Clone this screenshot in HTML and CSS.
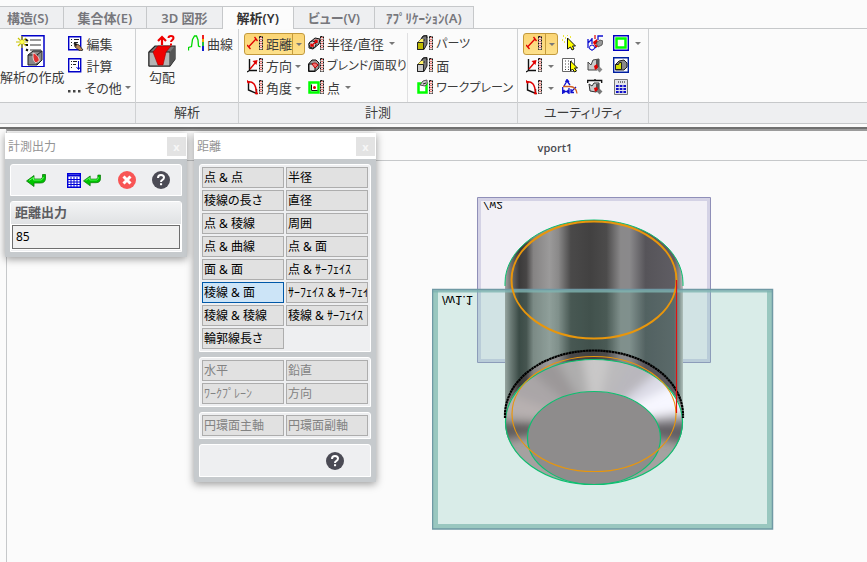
FILE: index.html
```html
<!DOCTYPE html>
<html lang="ja">
<head>
  <meta charset="UTF-8" />
  <meta name="viewport" content="width=device-width, initial-scale=1.0"/>
  <title>計測 - 距離</title>
  <link rel="stylesheet" href="styles.css">
</head>
<body>
  <svg class="defs" aria-hidden="true">
    <symbol id="ruler" viewBox="0 0 16 16">
      <path d="M12.500 1.500h3v13h-3z" fill="#f4e9e4" stroke="#111" stroke-dasharray="2 1"/>
      <path d="M14 2v12" stroke="#d00000" stroke-dasharray="1 1"/>
    </symbol>
    <symbol id="distance" viewBox="0 0 16 16">
      <path d="M1.500 12L9 4M0 10l3.500 4M7.500 2l3 4" stroke="#e00000" stroke-width="1.300" fill="none"/>
      <use href="#ruler"/>
    </symbol>
    <symbol id="direction" viewBox="0 0 16 16">
      <path d="M2.500 2v11.500H10M2.500 13.500L0 15" stroke="#111" stroke-width="1.400" fill="none"/>
      <path d="M3 12l6-7" stroke="#e00000" stroke-width="1.400"/><path d="M10.500 3l-1 5-4-4z" fill="#e00000"/>
      <use href="#ruler"/>
    </symbol>
    <symbol id="angle" viewBox="0 0 16 16">
      <path d="M1.500 2v9l8 3.500V10" stroke="#111" stroke-width="1.400" fill="none"/>
      <path d="M0 3c6-1 9 2 9.500 11M8 14.500h3M0 1.500l2 3" stroke="#e00000" stroke-width="1.500" fill="none"/>
      <use href="#ruler"/>
    </symbol>
    <symbol id="radius" viewBox="0 0 16 16">
      <path d="M1 8l6-5 5 1-1 5-6 5-4-1z" fill="#aaa" stroke="#111"/>
      <circle cx="4.500" cy="9.500" r="3.500" fill="#ccc" stroke="#111"/>
      <path d="M3 11l6-5M3 8.500V11h3M6.500 5.500H9V8" stroke="#e00000" stroke-width="1.400" fill="none"/>
      <use href="#ruler"/>
    </symbol>
    <symbol id="blend" viewBox="0 0 16 16">
      <path d="M.500 7L4 3h4l3 3v5l-4 3.500H.500z" fill="#999" stroke="#111"/>
      <path d="M1 7h4l2 2v5H1z" fill="#ddd" stroke="#111"/>
      <path d="M4 7c2-1 3-2 6 1l-3 3z" fill="#f07070" stroke="#c00000"/>
      <use href="#ruler"/>
    </symbol>
    <symbol id="point" viewBox="0 0 16 16">
      <path d="M1.500 3.500h9v10h-9z" fill="#fff" stroke="#0f0" stroke-width="2.500"/>
      <path d="M3.500 5.500v6h6" fill="none" stroke="#111"/><circle cx="6.500" cy="8.500" r="1.500" fill="#e00000"/>
      <use href="#ruler"/>
    </symbol>
    <symbol id="part" viewBox="0 0 16 16">
      <path d="M.500 7.500L4 4l2-3 4-.500V9l-3 5.500H.500z" fill="#777" stroke="#222"/>
      <path d="M.500 7.500h6v7h-6z" fill="#bcb800" stroke="#222"/><path d="M1 7l3-3h3L6 7z" fill="#fff36a"/>
      <path d="M5 3c1-3 5-3 5 0M6 5h2" stroke="#222" fill="none"/>
      <use href="#ruler"/>
    </symbol>
    <symbol id="face" viewBox="0 0 16 16">
      <path d="M.500 7.500L4 4l2-3 4-.500V9l-3 5.500H.500z" fill="#777" stroke="#222"/>
      <path d="M.500 7.500h6v7h-6z" fill="#ccc" stroke="#222"/><path d="M1 7l3-3h3L6 7z" fill="#fff36a"/>
      <path d="M5 3c1-3 5-3 5 0M6 5h2" stroke="#222" fill="none"/>
      <use href="#ruler"/>
    </symbol>
    <symbol id="workplane" viewBox="0 0 16 16">
      <path d="M1.500 4.500h8v9h-8z" fill="#fff" stroke="#0f0" stroke-width="2.500"/>
      <path d="M3 6l3-4 4-1v4L8 7z" fill="#ccc" stroke="#555"/><path d="M6 5l3-1" stroke="#222"/>
      <use href="#ruler"/>
    </symbol>
    <symbol id="enter" viewBox="0 0 20 14">
      <path d="M.500 8L8 2.500V6h6.500q2 0 2-2V1.500h3V5q0 5-5 5H8v3.500z" fill="#00c400" stroke="#0a7a0a" stroke-width=".8"/>
      <path d="M3 7.500L7.500 4.500v2.500H15q2-.5 2.300-3" stroke="#5dff5d" fill="none"/>
    </symbol>
    <symbol id="help" viewBox="0 0 18 18">
      <circle cx="9" cy="9" r="9" fill="#4b4b55"/>
      <path d="M6 7q0-3 3-3t3 2.600q0 1.400-1.500 2.200T9 11" fill="none" stroke="#fff" stroke-width="2"/>
      <path d="M8 12.200h2.100v2H8z" fill="#fff"/>
    </symbol>
  </svg>

  <header class="ribbon">
    <nav class="tabs">
      <button type="button" class="tab tab-first">構造(S)</button>
      <button type="button" class="tab">集合体(E)</button>
      <button type="button" class="tab">3D 図形</button>
      <button type="button" class="tab active">解析(Y)</button>
      <button type="button" class="tab">ビュー(V)</button>
      <button type="button" class="tab tab-last">ｱﾌﾟﾘｹｰｼｮﾝ(A)</button>
    </nav>

    <div class="groups">
      <section class="group group-create">
        <div class="tools">
          <button type="button" class="big">
            <svg class="icon-big" viewBox="0 0 32 32">
              <path d="M6 .700h22v31H6z" fill="#fff" stroke="#0000c8" stroke-width="1.500"/>
              <path d="M14 5h11M14 10h11M14 15h11" stroke="#333"/>
              <path d="M9 4l3 2M9 10h3M10 14.500l2 1" stroke="#111" stroke-width="2"/>
              <path d="M6 1v12M0 7h12M2 3l8 8M10 3l-8 8" stroke="#c9c400" stroke-width="1.200"/>
              <circle cx="6" cy="7" r="2" fill="#ffff50"/>
              <path d="M12 20l5-4h9v9l-5 5h-9z" fill="#888" stroke="#222"/>
              <path d="M12 20h9l5-4M21 20v10" stroke="#222" fill="none"/>
              <path d="M17 18c4 1 7 6 6 8l-3 2c-3-2-3-5-3-10z" fill="#e03030" stroke="#fff" stroke-width=".7"/>
            </svg>
            <span>解析の作成</span>
          </button>
          <div class="column">
            <button type="button" class="tool">
              <svg class="icon" viewBox="0 0 16 16"><path d="M.700 1.700h12v13h-12z" fill="#fff" stroke="#0000c8" stroke-width="1.400"/><path d="M3 4.500h1M6 4.500h5M3 7.500h1M6 7.500h4M3 10.500h1" stroke="#222"/><path d="M6 8l5 2 4 5-3 1-5-4z" fill="#b98555" stroke="#222" stroke-width=".8"/><path d="M6 8l3 1-1 3z" fill="#111"/></svg>
              編集
            </button>
            <button type="button" class="tool">
              <svg class="icon" viewBox="0 0 16 16"><path d="M.700 1.700h12v13h-12z" fill="#fff" stroke="#0000c8" stroke-width="1.400"/><path d="M3 4.500h1M5 4.500h4M3 7.500h1M5 7.500h3M3 10.500h1" stroke="#222"/><path d="M10.500 4v8M8.500 10l2 2.500 2-2.500" stroke="#0000c8" fill="none"/></svg>
              計算
            </button>
            <button type="button" class="tool more">
              <svg class="icon" viewBox="0 0 16 16"><path d="M0 11h2.500v2.500H0zM5 11h2.500v2.500H5zM10 11h2.500v2.500H10z" fill="#444"/></svg>
              その他<i class="arrow"></i>
            </button>
          </div>
        </div>
        <h2></h2>
      </section>

      <section class="group group-analysis">
        <div class="tools">
          <button type="button" class="big">
            <svg class="icon-big" viewBox="0 0 32 32">
              <path d="M3 17l6-6h20v13l-5 7H3z" fill="#777" stroke="#222" stroke-width="1.200"/>
              <path d="M3 17h21v14H3z" fill="#b5b5b5" stroke="#222"/><path d="M24 17l5-6v13l-5 7z" fill="#555"/>
              <path d="M7 17l5-6h13l-5 6-3 13h-5z" fill="#f00000" stroke="#900" stroke-width=".6"/>
              <path d="M16 10V3M12 6l4-4 4 4" stroke="#f00000" stroke-width="2.200" fill="none"/>
              <path d="M22.500 3q0-2 2.500-2t2.500 2q0 1-1.200 2T25 7M25 8.500v2" stroke="#f00000" stroke-width="2" fill="none"/>
            </svg>
            <span>勾配</span>
          </button>
          <div class="column">
            <button type="button" class="tool">
              <svg class="icon" viewBox="0 0 16 16"><path d="M.500 15.500v-3l3-1 1-7L6.500 1h2L10 5l.500 6 2 1" fill="none" stroke="#00d800" stroke-width="1.300"/><path d="M14 0h2v4h-2z" fill="#f02020"/><path d="M14 4h2v3h-2z" fill="#f0b000"/><path d="M14 7h2v4h-2z" fill="#20c040"/><path d="M14 11h2v5h-2z" fill="#1020d0"/></svg>
              曲線
            </button>
          </div>
        </div>
        <h2>解析</h2>
      </section>

      <section class="group group-measure">
        <div class="tools">
          <div class="column">
            <div class="split pressed"><button type="button" class="tool"><svg class="icon"><use href="#distance"/></svg>距離</button><button type="button" class="drop" aria-label="距離メニュー"><i class="arrow"></i></button></div>
            <div class="split"><button type="button" class="tool"><svg class="icon"><use href="#direction"/></svg>方向</button><button type="button" class="drop" aria-label="方向メニュー"><i class="arrow"></i></button></div>
            <div class="split"><button type="button" class="tool"><svg class="icon"><use href="#angle"/></svg>角度</button><button type="button" class="drop" aria-label="角度メニュー"><i class="arrow"></i></button></div>
          </div>
          <div class="column column-shape">
            <button type="button" class="tool"><svg class="icon"><use href="#radius"/></svg>半径/直径<i class="arrow"></i></button>
            <button type="button" class="tool kana"><svg class="icon"><use href="#blend"/></svg>ブレンド/面取り</button>
            <button type="button" class="tool"><svg class="icon"><use href="#point"/></svg>点<i class="arrow"></i></button>
          </div>
          <div class="column column-part">
            <button type="button" class="tool kana"><svg class="icon"><use href="#part"/></svg>パーツ</button>
            <button type="button" class="tool"><svg class="icon"><use href="#face"/></svg>面</button>
            <button type="button" class="tool kana"><svg class="icon"><use href="#workplane"/></svg>ワークプレーン</button>
          </div>
        </div>
        <h2>計測</h2>
      </section>

      <section class="group group-utility">
        <div class="tools">
          <div class="column">
            <div class="split pressed"><button type="button" class="tool" aria-label="距離"><svg class="icon"><use href="#distance"/></svg></button><button type="button" class="drop" aria-label="距離メニュー"><i class="arrow"></i></button></div>
            <div class="split"><button type="button" class="tool" aria-label="方向"><svg class="icon"><use href="#direction"/></svg></button><button type="button" class="drop" aria-label="方向メニュー"><i class="arrow"></i></button></div>
            <div class="split"><button type="button" class="tool" aria-label="角度"><svg class="icon"><use href="#angle"/></svg></button><button type="button" class="drop" aria-label="角度メニュー"><i class="arrow"></i></button></div>
          </div>
          <div class="icon-grid">
            <button type="button" class="tool" aria-label="選択"><svg class="icon" viewBox="0 0 16 16"><path d="M5.500 3v11l3-2 1.500 3 2-1-1.500-3h3z" fill="#ff0" stroke="#111"/><path d="M1 1h1M5 0h1M8 2h1M0 5h1M3 3h1M2 7h1" stroke="#e8e000" stroke-width="1.500"/></svg></button>
            <button type="button" class="tool" aria-label="寸法"><svg class="icon" viewBox="0 0 16 16"><path d="M1 4v9M1 8l4-4M5 3v6M11 5V1h5M2 13l3 2 4-3" stroke="#1010d0" stroke-width="1.300" fill="none"/><path d="M8 0v4" stroke="#e00000" stroke-width="1.200"/><circle cx="5" cy="12.500" r="2.500" fill="#fff" stroke="#1010d0"/><path d="M6 7l4-3 1 4-4 2z" fill="#e00000"/><path d="M9 8l4-3 3 1-1 4-4 2z" fill="#999" stroke="#333" stroke-width=".7"/><path d="M8 10l2 2" stroke="#e00000" stroke-width="2"/></svg></button>
            <button type="button" class="tool" aria-label="ワークプレーン"><svg class="icon" viewBox="0 0 16 16"><path d="M.700.700h14.600v14.600H.700z" fill="#fff" stroke="#0000c0" stroke-width="1.400"/><path d="M3.500 3.500h9v9h-9z" fill="none" stroke="#0f0" stroke-width="2.500"/></svg></button>
            <button type="button" class="tool" aria-label="メニュー"><i class="arrow"></i></button>
            <button type="button" class="tool" aria-label="グリッド"><svg class="icon" viewBox="0 0 16 16"><path d="M.500 1.500h12v13H.500z" fill="#fff" stroke="#666"/><path d="M3 4h9M3 7h9M3 10h9M3 12.500h9" stroke="#444" stroke-dasharray="1 2"/><path d="M8.500 4v10l2-2 2 3 2-1-2-3h3z" fill="#ff0" stroke="#111"/></svg></button>
            <button type="button" class="tool" aria-label="部分"><svg class="icon" viewBox="0 0 16 16"><path d="M1 5l3 3 2-5 6-1v9l-2 2H1z" fill="#ccc" stroke="#444"/><path d="M9 2h3v8l-3 2z" fill="#555"/><path d="M7 9l3-2 1 4-3 2z" fill="#e00000"/><path d="M11 11l3 3" stroke="#888" stroke-width="4"/></svg></button>
            <button type="button" class="tool" aria-label="パーツ"><svg class="icon" viewBox="0 0 16 16"><path d="M.700.700h14.600v14.600H.700z" fill="#fff" stroke="#0020a0" stroke-width="1.400"/><path d="M2.500 7.500L6 4l5-1 3 3v4l-3 3H2.500z" fill="#888" stroke="#222"/><path d="M2.500 7.500h3l1-2h2v7h-6z" fill="#d2e000" stroke="#222"/></svg></button>
            <span></span>
            <button type="button" class="tool" aria-label="角度寸法"><svg class="icon" viewBox="0 0 16 16"><path d="M.700 15V8M7 15V9M1 12.500h6M2.500 11L1 12.500 2.500 14M5.500 11L7 12.500 5.500 14M2 7l3-5 3 4M3.500 3L5 .500 7 3M9 13l5-5M9 10v3.500h3" stroke="#1010d0" stroke-width="1.300" fill="none"/><path d="M1 7.500h7q6 0 7 7" stroke="#d06020" stroke-width="1.300" fill="none"/></svg></button>
            <button type="button" class="tool" aria-label="回転"><svg class="icon" viewBox="0 0 16 16"><path d="M.700 4V1.500h14V4M8 0v2" stroke="#111" stroke-width="1.300" fill="none"/><path d="M2 5l3 2 2-3 5 0v7l-3 2-6-1z" fill="#ccc" stroke="#333"/><path d="M9 5h3v5l-3 2z" fill="#555"/><path d="M7 9l3-1 1 3-3 2z" fill="#e00000"/><path d="M11 11l3 3" stroke="#777" stroke-width="4"/></svg></button>
            <button type="button" class="tool" aria-label="電卓"><svg class="icon" viewBox="0 0 16 16"><path d="M1.500.500h13v15h-13z" fill="#e4e4ea" stroke="#777"/><path d="M5 3h8" stroke="#111" stroke-dasharray="1 1"/><path d="M3 7h10M3 10h10M3 13h10" stroke="#1010c8" stroke-width="2" stroke-dasharray="2.700 1"/></svg></button>
          </div>
        </div>
        <h2>ユーティリティ</h2>
      </section>

      <section class="group group-rest">
        <div class="tools"></div>
        <h2></h2>
      </section>
    </div>
  </header>

  <main class="viewport">
    <h1>vport1</h1>
    <div class="stage">
      <svg class="scene" viewBox="432 196 342 336">
        <defs>
          <linearGradient id="metal" gradientUnits="userSpaceOnUse" x1="505" y1="0" x2="683" y2="0">
            <stop offset="0" stop-color="#a3a1a1"/>
            <stop offset=".03" stop-color="#767474"/>
            <stop offset=".08" stop-color="#3b3a3a"/>
            <stop offset=".12" stop-color="#474545"/>
            <stop offset=".16" stop-color="#858383"/>
            <stop offset=".25" stop-color="#9b9a9a"/>
            <stop offset=".3" stop-color="#8a8989"/>
            <stop offset=".37" stop-color="#4a4949"/>
            <stop offset=".48" stop-color="#424141"/>
            <stop offset=".57" stop-color="#4c4b4b"/>
            <stop offset=".65" stop-color="#8a898a"/>
            <stop offset=".7" stop-color="#8a898b"/>
            <stop offset=".79" stop-color="#565459"/>
            <stop offset=".95" stop-color="#5f5d63"/>
            <stop offset=".98" stop-color="#8d8c8e"/>
            <stop offset="1" stop-color="#c0c0c0"/>
          </linearGradient>
          <clipPath id="chamfer"><ellipse cx="594" cy="422" rx="89" ry="62.500"/></clipPath>
          <filter id="soft"><feGaussianBlur stdDeviation="5"/></filter>
        </defs>

        <!-- workplane w2 -->
        <path d="M477.500 197.500h233v165h-233z" fill="#f2f0f6" stroke="#8f8fb8"/>
        <path d="M479.500 199.500h229v161h-229z" fill="none" stroke="#d4d2e5" stroke-width="3"/>

        <!-- workplane w1.1 -->
        <path d="M432.500 289.500h340v239.500h-340z" fill="#d9ece8"/>
        <path d="M477.500 289.500h233v73h-233z" fill="#d1e3e4" stroke="#8c9cb9"/>
        <path d="M479.500 291v69.500h229V291" fill="none" stroke="#b9ccd8" stroke-width="3"/>
        <path d="M435.500 291v235.500h334V291" fill="none" stroke="#99c7bf" stroke-width="5"/>

        <!-- cylinder -->
        <path d="M505 415V283a89 63 0 0 1 178 0v132z" fill="url(#metal)"/>
        <path d="M505 290h178v125H505z" fill="#3cbe9b" opacity=".13"/>
        <path d="M505 286v-3a89 63 0 0 1 178 0v3" fill="none" stroke="#0cc070"/>
        <path d="M433 291h340" stroke="#7fb5b2" stroke-width="3" opacity=".8"/>
        <path d="M432.500 289.500h340v239.500h-340z" fill="none" stroke="#6f99a4" stroke-width="1.500"/>
        <ellipse cx="594" cy="415" rx="89" ry="64.500" fill="url(#metal)"/>
        <g clip-path="url(#chamfer)">
          <path d="M490 350h210v150H490z" fill="#a5a1a0"/>
          <g filter="url(#soft)">
            <path d="M594 425L444 410 453 374z" fill="#b8b1b1"/>
            <path d="M594 425L453 374 479 329z" fill="#aaa6a7"/>
            <path d="M594 425L479 329 519 295z" fill="#9b9899"/>
            <path d="M594 425L519 295 568 277z" fill="#aeadad"/>
            <path d="M594 425L568 277 630 277z" fill="#c9c8c8"/>
            <path d="M594 425L630 277 669 295z" fill="#bbbabc"/>
            <path d="M594 425L669 295 709 329z" fill="#b9b7bd"/>
            <path d="M594 425L709 329 730 355z" fill="#dcdbe7"/>
            <path d="M594 425L730 355 744 405z" fill="#f7f7ff"/>
            <path d="M594 425L744 405 744 420z" fill="#a5a3a8"/>
            <path d="M594 425L744 420 740 455z" fill="#625f63"/>
            <path d="M594 425L444 420 444 450z" fill="#5f5b5c"/>
          </g>
        </g>
        <ellipse cx="594" cy="438" rx="66.500" ry="46.500" fill="#8e8c8c" stroke="#0cc070" stroke-width="1.200"/>
        <ellipse cx="594" cy="422" rx="88.500" ry="62.500" fill="none" stroke="#0cc070" stroke-width="1.200"/>
        <path d="M505 418v-3a89 64.500 0 0 1 178 0v3" fill="none" stroke="#000" stroke-width="2.200" stroke-dasharray="2.500 .4"/>
        <ellipse cx="594" cy="414" rx="82" ry="57.500" fill="none" stroke="#e8960c" stroke-width="1.200"/>
        <ellipse cx="594" cy="280" rx="82.500" ry="58.500" fill="none" stroke="#e8960c" stroke-width="2"/>
        <path d="M676.500 280v133" stroke="#e01010" stroke-width="1.200"/>

        <!-- labels lie on the back side of the planes -->
        <text class="plane-label" x="483" y="-202" transform="scale(1 -1)">/w2</text>
        <text class="plane-label plane-label-front" x="442" y="-296" transform="scale(1 -1)">/w1.1</text>
      </svg>
    </div>
  </main>

  <div class="dialog dialog-output">
    <div class="titlebar"><span>計測出力</span><button type="button" class="close" aria-label="閉じる">x</button></div>
    <div class="dialog-body">
      <div class="panel actions">
        <button type="button" aria-label="確定"><svg width="20" height="14"><use href="#enter"/></svg></button>
        <button type="button" class="table-enter" aria-label="表に出力"><svg width="14" height="15" viewBox="0 0 14 15"><path d="M.700.700h12.600v13.600H.700z" fill="#fff" stroke="#0000d8" stroke-width="1.400"/><path d="M1 2.500h12" stroke="#0000d8" stroke-width="2"/><path d="M1 6.500h12M1 9h12M1 11.500h12M4 4v10M7 4v10M10 4v10" stroke="#0000d8"/></svg><svg width="18" height="14"><use href="#enter"/></svg></button>
        <button type="button" aria-label="キャンセル"><svg width="18" height="18" viewBox="0 0 18 18"><circle cx="9" cy="9" r="9" fill="#f85555"/><path d="M5.500 5.500l7 7M12.500 5.500l-7 7" stroke="#fff" stroke-width="3"/></svg></button>
        <button type="button" aria-label="ヘルプ"><svg width="18" height="18"><use href="#help"/></svg></button>
      </div>
      <div class="panel output">
        <label for="distance-output">距離出力</label>
        <input type="text" id="distance-output" value="85" readonly />
      </div>
    </div>
  </div>

  <div class="dialog dialog-distance">
    <div class="titlebar"><span>距離</span><button type="button" class="close" aria-label="閉じる">x</button></div>
    <div class="dialog-body">
      <div class="panel options">
        <button type="button">点 &amp; 点</button>
        <button type="button">半径</button>
        <button type="button">稜線の長さ</button>
        <button type="button">直径</button>
        <button type="button">点 &amp; 稜線</button>
        <button type="button">周囲</button>
        <button type="button">点 &amp; 曲線</button>
        <button type="button">点 &amp; 面</button>
        <button type="button">面 &amp; 面</button>
        <button type="button">点 &amp; ｻｰﾌｪｲｽ</button>
        <button type="button" class="selected">稜線 &amp; 面</button>
        <button type="button">ｻｰﾌｪｲｽ &amp; ｻｰﾌｪｲｽ</button>
        <button type="button">稜線 &amp; 稜線</button>
        <button type="button">稜線 &amp; ｻｰﾌｪｲｽ</button>
        <button type="button">輪郭線長さ</button>
      </div>
      <div class="panel options">
        <button type="button" disabled>水平</button>
        <button type="button" disabled>鉛直</button>
        <button type="button" disabled>ﾜｰｸﾌﾟﾚｰﾝ</button>
        <button type="button" disabled>方向</button>
      </div>
      <div class="panel options">
        <button type="button" disabled>円環面主軸</button>
        <button type="button" disabled>円環面副軸</button>
      </div>
      <div class="panel help">
        <button type="button" aria-label="ヘルプ"><svg width="18" height="18"><use href="#help"/></svg></button>
      </div>
    </div>
  </div>
</body>
</html>
```
FILE: styles.css
```css
* {
  box-sizing: border-box;
}
body {
  margin: 0;
  min-height: 100vh;
  display: flex;
  flex-direction: column;
  overflow: hidden;
  background: #fbfbfb;
  color: #3c3c3c;
  font-family: "Noto Sans", "Noto Sans CJK JP", sans-serif;
  font-size: 13px;
  font-feature-settings: "palt";
}
button {
  margin: 0;
  padding: 0;
  border: 0;
  background: none;
  color: inherit;
  font: inherit;
  font-feature-settings: inherit;
  white-space: nowrap;
  cursor: pointer;
}
svg {
  display: block;
  flex: none;
}
h1, h2 {
  margin: 0;
}
.defs {
  position: absolute;
  width: 0;
  height: 0;
}

/* ribbon */
.ribbon {
  padding-top: 6px;
  border-bottom: 2px solid #707070;
}
.tabs {
  display: flex;
  height: 23px;
  border-bottom: 1px solid #c6c8ca;
}
.tab {
  height: 22px;
  padding: 0 14px;
  border: 1px solid #c6c8ca;
  border-left-width: 0;
  border-bottom: 0;
  background: #eeeff1;
  color: #77777c;
  font-size: 13px;
  font-weight: 600;
  line-height: 20px;
}
.tab-first {
  padding-left: 7px;
}
.tab-last {
  padding: 0 11px;
}
.tab.active {
  height: 23px;
  background: #fcfcfc;
  color: #333;
}
.groups {
  display: flex;
  margin-bottom: 3px;
  border-bottom: 1px solid #c6c8ca;
}
.group {
  flex: none;
  border-right: 1px solid #cfd1d3;
}
.group-create {
  width: 136px;
}
.group-analysis {
  width: 103px;
}
.group-measure {
  width: 279px;
}
.group-utility {
  width: 131px;
}
.group-rest {
  flex: 1;
  border-right: 0;
}
.tools {
  display: flex;
  height: 73px;
  padding: 4px 4px 0;
}
.group h2 {
  height: 21px;
  border-top: 1px solid #c6c8ca;
  background: #eeeff1;
  font-size: 13px;
  font-weight: normal;
  line-height: 18px;
  text-align: center;
}
.group-create .tools {
  padding-left: 0;
  gap: 3px;
}
.group-analysis .tools {
  padding-left: 10px;
  gap: 10px;
}
.big {
  min-width: 30px;
  height: 64px;
  display: flex;
  flex-direction: column;
  align-items: center;
  padding-top: 2px;
  line-height: 20px;
}
.icon-big {
  width: 32px;
  height: 32px;
}
.icon {
  width: 16px;
  height: 16px;
}
.tool {
  height: 22px;
  display: flex;
  align-items: center;
  gap: 3px;
  padding-bottom: 2px;
}
.more {
  gap: 1px;
}
.kana {
  font-size: 12px;
}
.arrow {
  flex: none;
  width: 0;
  height: 0;
  border: 3px solid transparent;
  border-top-color: #777;
  border-bottom: 0;
  margin-left: 2px;
}
.split {
  display: flex;
  height: 22px;
}
.split .tool {
  padding-left: 3px;
}
.drop {
  width: 12px;
  display: flex;
  align-items: center;
  justify-content: center;
}
.drop .arrow, .icon-grid .arrow {
  margin-left: 0;
}
.pressed {
  border: 1px solid #c39a3c;
  border-radius: 3px;
  background: linear-gradient(#fbd575, #fde08a);
}
.pressed .tool, .pressed .drop {
  height: 20px;
}
.pressed .tool {
  padding-left: 2px;
}
.pressed .drop {
  border-left: 1px solid #c39a3c;
}
.group-measure .tools {
  padding-left: 5px;
}
.column-shape {
  width: 105px;
  margin-left: 3px;
  border-right: 1px solid #e0e0e2;
}
.column-part {
  margin-left: 9px;
}
.group-utility .tools {
  padding-left: 5px;
  gap: 4px;
}
.group-utility .split .tool {
  padding-right: 3px;
}
.icon-grid {
  display: grid;
  grid-template-columns: 25px 26px 22px 8px;
  grid-auto-rows: 22px;
}

/* viewport */
.viewport {
  flex: 1;
  display: flex;
  flex-direction: column;
  margin-left: 6px;
  border-left: 1px solid #c6c8ca;
  border-top: 2px solid #9b9b9b;
}
.viewport h1 {
  height: 30px;
  padding-left: 236px;
  border-bottom: 1px solid #c6c8ca;
  color: #4a4a50;
  font-family: "Open Sans", "Noto Sans", sans-serif;
  font-size: 11px;
  font-weight: 600;
  line-height: 34px;
  text-align: center;
}
.stage {
  display: flex;
  justify-content: flex-end;
  padding: 35px 93px 0 0;
}
.scene {
  width: 342px;
  height: 336px;
}
.plane-label {
  fill: #000;
  font-family: "Liberation Mono", "Courier New", monospace;
  font-size: 11px;
}
.plane-label-front {
  font-family: "Liberation Sans", Arial, sans-serif;
  font-size: 13px;
}

/* floating dialogs */
.dialog {
  position: absolute;
  top: 133px;
  width: 182px;
  background: #c6cacd;
  box-shadow: 0 2px 8px rgba(0, 0, 0, 0.4);
  color: #000;
  font-size: 12px;
}
.dialog-output {
  left: 5px;
}
.dialog-distance {
  left: 194px;
}
.titlebar {
  display: flex;
  justify-content: space-between;
  align-items: center;
  height: 26px;
  padding: 0 1px 0 3px;
  background: #fff;
  color: #949494;
}
.close {
  width: 19px;
  height: 19px;
  background: #e3e3e3;
  color: #f6f6f6;
  font-size: 11px;
  font-weight: bold;
  line-height: 17px;
}
.dialog-body {
  display: flex;
  flex-direction: column;
  gap: 5px;
  padding: 5px;
}
.panel {
  border: 1px solid #fff;
  border-radius: 3px 3px 0 0;
  background: #eeeff1;
}
.actions {
  display: flex;
  align-items: center;
  justify-content: space-between;
  height: 32px;
  padding: 0 11px 0 15px;
}
.table-enter {
  display: flex;
  align-items: center;
  gap: 2px;
  margin-left: 5px;
}
.output label {
  display: block;
  height: 23px;
  padding-left: 4px;
  background: linear-gradient(#f3f4f5, #dfe1e3);
  color: #5c5c60;
  font-size: 13px;
  font-weight: bold;
  line-height: 20px;
}
.output input {
  display: block;
  width: calc(100% - 2px);
  height: 24px;
  margin: 0 1px 2px;
  padding: 0 3px 2px;
  border: 1px solid #6e6e6e;
  outline: 1px solid #fff;
  background: #f0f0f0;
  color: #000;
  font: inherit;
}
.options {
  display: grid;
  grid-template-columns: 1fr 1fr;
  grid-auto-rows: 21px;
  gap: 2px;
  padding: 2px;
}
.options button {
  min-width: 0;
  padding-left: 1px;
  border: 1px solid #adadad;
  background: #e1e1e1;
  line-height: 19px;
  text-align: left;
  overflow: hidden;
}
.options .selected {
  border-color: #0058a8;
  background: #cce4f7;
}
.options button:disabled {
  color: #838383;
}
.help {
  display: flex;
  align-items: center;
  justify-content: flex-end;
  height: 33px;
  padding-right: 26px;
}
```
